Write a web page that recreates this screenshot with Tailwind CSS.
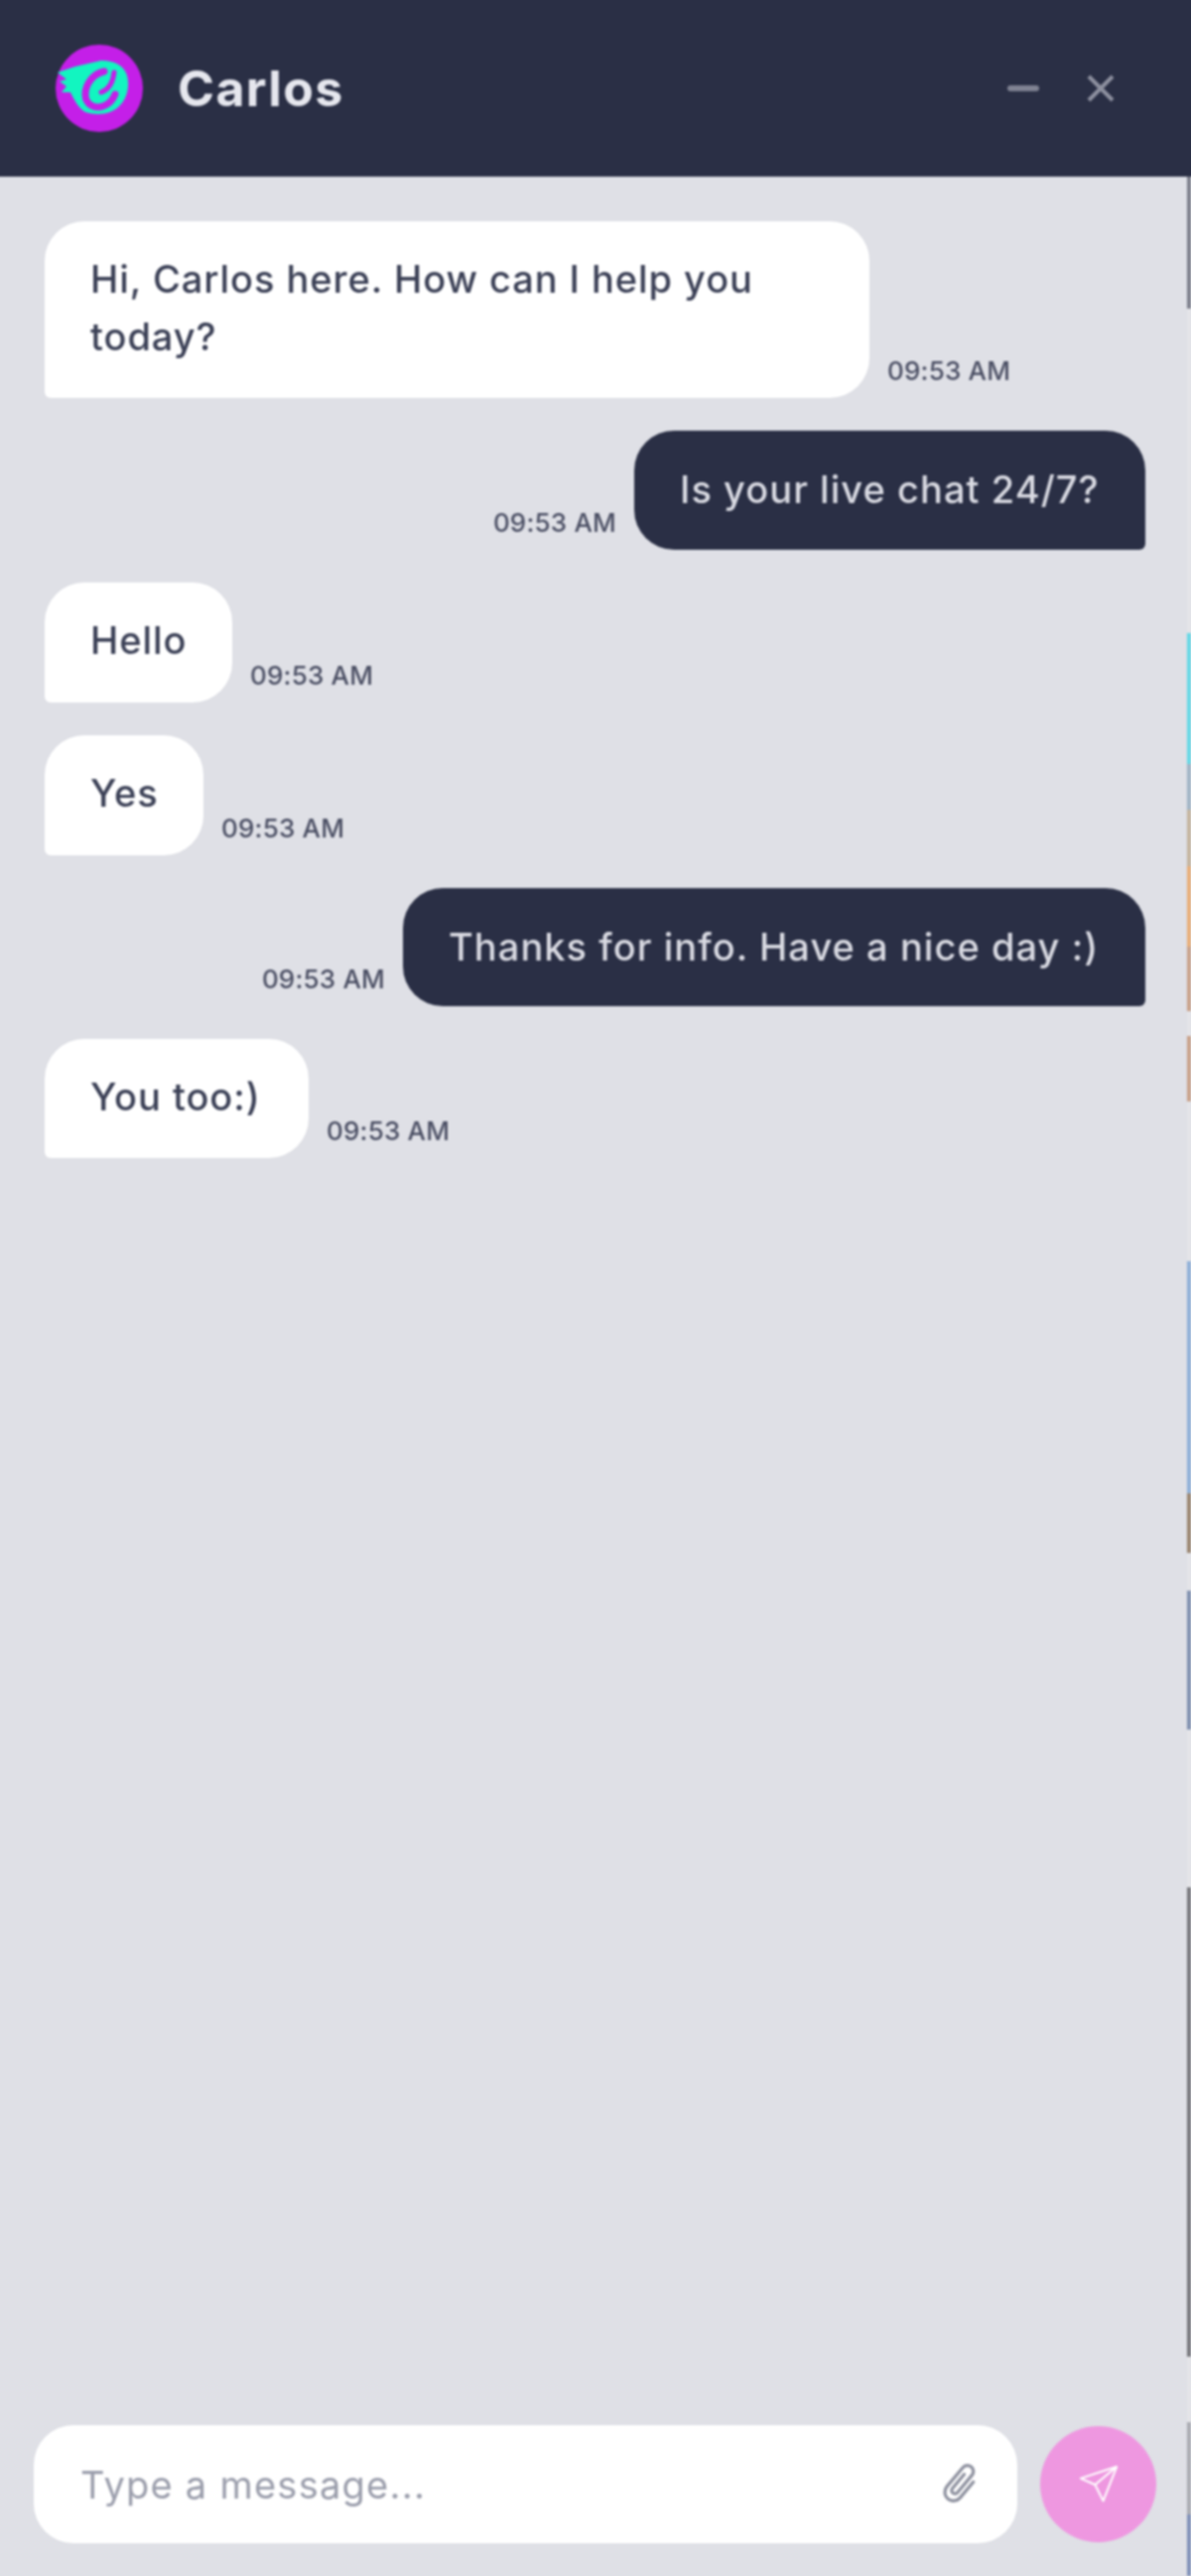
<!DOCTYPE html>
<html lang="en">
<head>
    <meta charset="UTF-8">
    <meta name="viewport" content="width=device-width, initial-scale=1.0">
    <title>Chat</title>
    <script src="https://cdn.jsdelivr.net/npm/@tailwindcss/browser@4"></script>
</head>
<body class="bg-[#dfe0e6] overflow-hidden">

<div class="w-[1200px] h-[2596px] flex flex-col font-['Inter',sans-serif] blur-[1.1px]">
    <!-- header -->
    <header class="h-[178px] shrink-0 bg-[#2a2f45] flex items-center pl-[55px] pr-[77px] shadow-[-8px_0_0_#2a2f45,8px_0_0_#2a2f45,0_-8px_0_#2a2f45,-8px_-8px_0_#2a2f45,8px_-8px_0_#2a2f45]">
        <svg class="w-[90px] h-[90px]" viewBox="16 14 90 90">
            <circle cx="61" cy="59" r="44" fill="#c41fe8"/>
            <path d="M19 43 L37 37 L63 31 C76 31 86 36 89 46 C92 57 89 69 82 76 C74 85 60 87 47 83 C40 79 36 71 32 63 L23 63 L28 57 L21 52 L28 50 Z" fill="#12f5c0"/>
            <path d="M66 42 C55 44 47 55 47 65 C47 76 57 80 65 77 C71 75 75 70 77 65" fill="none" stroke="#c41fe8" stroke-width="7" stroke-linecap="round"/>
            <path d="M76 43 C75 52 71 60 63 63" fill="none" stroke="#c41fe8" stroke-width="5" stroke-linecap="round"/>
        </svg>
        <h1 class="ml-[34px] text-[50px] leading-none font-bold text-[#e6e7ee] tracking-[1.4px]">Carlos</h1>
        <div class="ml-auto flex items-center gap-[48px]">
            <span class="block w-[32px] h-[6px] rounded-full bg-[#7f8292]"></span>
            <svg class="w-[28px] h-[28px]" viewBox="0 0 28 28" fill="none" stroke="#8d909f" stroke-width="4">
                <path d="M2 2 L26 26 M26 2 L2 26"/>
            </svg>
        </div>
    </header>

    <div class="flex-1 flex min-h-0">
        <main class="flex-1 flex flex-col min-w-0">
            <!-- messages -->
            <div class="flex-1 flex flex-col gap-[33px] pt-[45px] pl-[45px] pr-[42px]">
                <div class="flex items-end gap-[18px]">
                    <div class="w-[831px] h-[178px] bg-white rounded-[40px] rounded-bl-[6px] px-[46px] pt-[29px] text-[38px] leading-[58px] font-medium text-[#3b4056] tracking-[0.95px]">Hi, Carlos here. How can I help you today?</div>
                    <span class="text-[26px] leading-none font-medium tracking-[0.2px] text-[#4a4e63] pb-[14px]">09:53 AM</span>
                </div>
                <div class="flex items-end justify-end gap-[18px]">
                    <span class="text-[26px] leading-none font-medium tracking-[0.2px] text-[#4a4e63] pb-[14px]">09:53 AM</span>
                    <div class="w-[515px] h-[120px] bg-[#2a2f45] rounded-[40px] rounded-br-[6px] px-[46px] pt-[30px] text-[38px] leading-[58px] font-medium text-[#d9dae2] tracking-[1.05px] whitespace-nowrap">Is your live chat 24/7?</div>
                </div>
                <div class="flex items-end gap-[18px]">
                    <div class="w-[189px] h-[121px] bg-white rounded-[40px] rounded-bl-[6px] px-[46px] pt-[29px] text-[38px] leading-[58px] font-medium text-[#3b4056] tracking-[0.95px]">Hello</div>
                    <span class="text-[26px] leading-none font-medium tracking-[0.2px] text-[#4a4e63] pb-[14px]">09:53 AM</span>
                </div>
                <div class="flex items-end gap-[18px]">
                    <div class="w-[160px] h-[121px] bg-white rounded-[40px] rounded-bl-[6px] px-[46px] pt-[29px] text-[38px] leading-[58px] font-medium text-[#3b4056] tracking-[0.95px]">Yes</div>
                    <span class="text-[26px] leading-none font-medium tracking-[0.2px] text-[#4a4e63] pb-[14px]">09:53 AM</span>
                </div>
                <div class="flex items-end justify-end gap-[18px]">
                    <span class="text-[26px] leading-none font-medium tracking-[0.2px] text-[#4a4e63] pb-[14px]">09:53 AM</span>
                    <div class="w-[748px] h-[119px] bg-[#2a2f45] rounded-[40px] rounded-br-[6px] px-[46px] pt-[30px] text-[38px] leading-[58px] font-medium text-[#d9dae2] tracking-[1.05px] whitespace-nowrap">Thanks for info. Have a nice day :)</div>
                </div>
                <div class="flex items-end gap-[18px]">
                    <div class="w-[266px] h-[120px] bg-white rounded-[40px] rounded-bl-[6px] px-[46px] pt-[29px] text-[38px] leading-[58px] font-medium text-[#3b4056] tracking-[0.95px] whitespace-nowrap">You too:)</div>
                    <span class="text-[26px] leading-none font-medium tracking-[0.2px] text-[#4a4e63] pb-[14px]">09:53 AM</span>
                </div>
            </div>

            <!-- input -->
            <div class="flex items-center gap-[23px] pl-[34px] pr-[31px] pb-[33px]">
                <div class="flex-1 h-[119px] bg-white rounded-[40px] flex items-center pl-[47px] pr-[34px]">
                    <span class="text-[38px] leading-none tracking-[1.25px] text-[#9b9eac]">Type a message...</span>
                    <svg class="ml-auto w-[48px] h-[48px]" viewBox="0 0 44 44" fill="none" stroke="#8f92a0" stroke-width="3" stroke-linecap="round">
                        <path transform="rotate(40 22 22)" d="M30 12 V31 a8 8 0 0 1-16 0 V8 a5.5 5.5 0 0 1 11 0 V29 a3 3 0 0 1-6 0 V12"/>
                    </svg>
                </div>
                <button class="w-[117px] h-[117px] rounded-full bg-[#ee97e0] flex items-center justify-center">
                    <svg class="w-[40px] h-[40px]" viewBox="0 0 44 44" fill="none" stroke="#fff" stroke-width="2.2" stroke-linejoin="round">
                        <path d="M42 2 L2 15 L18 22 L27 40 Z M42 2 L18 22"/>
                    </svg>
                </button>
            </div>
        </main>

        <!-- sliver of the window behind -->
        <aside class="w-[4px] shrink-0 flex flex-col">
            <div class="h-[133px] bg-[#7c7f8c]"></div>
            <div class="h-[327px] bg-[#e4e4e8]"></div>
            <div class="h-[132px] bg-[#66d8e6]"></div>
            <div class="h-[46px] bg-[#a0b4c6]"></div>
            <div class="h-[57px] bg-[#c4b49e]"></div>
            <div class="h-[81px] bg-[#e8ae78]"></div>
            <div class="h-[65px] bg-[#c9a18a]"></div>
            <div class="h-[25px] bg-[#e4e4e8]"></div>
            <div class="h-[66px] bg-[#c9a18a]"></div>
            <div class="h-[161px] bg-[#e4e4e8]"></div>
            <div class="h-[234px] bg-[#8fb0d8]"></div>
            <div class="h-[60px] bg-[#9a8570]"></div>
            <div class="h-[38px] bg-[#e4e4e8]"></div>
            <div class="h-[140px] bg-[#8090b0]"></div>
            <div class="h-[159px] bg-[#e4e4e8]"></div>
            <div class="h-[473px] bg-[#77777c]"></div>
            <div class="h-[66px] bg-[#e4e4e8]"></div>
            <div class="h-[93px] bg-[#aaabb2]"></div>
            <div class="flex-1 bg-[#8090b8]"></div>
        </aside>
    </div>
</div>

</body>
</html>
